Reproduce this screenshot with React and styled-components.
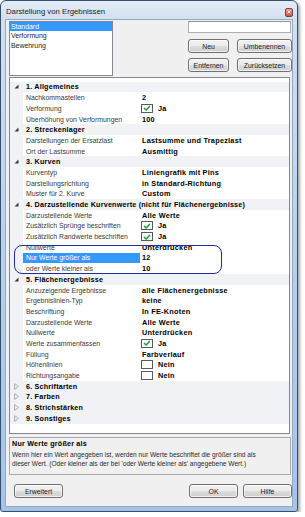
import styled, { createGlobalStyle } from 'styled-components'

const GlobalStyle = createGlobalStyle`
  html, body { margin: 0; padding: 0; background: #fff; }
  body { font-family: "Liberation Sans", Arial, sans-serif; color: #000; }
`

const Window = styled.div`
  box-sizing: border-box;
  width: 298px;
  height: 512px;
  display: flex;
  flex-direction: column;
  border: 1px solid #34506f;
  border-radius: 6px 6px 3px 3px;
  background: linear-gradient(to bottom, #e4ecf6 0px, #d2e0f0 18px, #b4cdea 60%, #a6c3e6 100%);
  box-shadow: 2px 2px 3px rgba(0, 0, 0, 0.35);
  padding: 0 4px 4px 4px;
`

const TitleBar = styled.div`
  height: 18px;
  display: flex;
  align-items: center;
  justify-content: space-between;
  padding: 0 0 0 1px;
`

const Title = styled.div`
  font-size: 7.75px;
  color: #1a1a1a;
  margin-top: 2px;
`

const CloseBtn = styled.div`
  box-sizing: border-box;
  width: 8px;
  height: 9px;
  margin-top: 4px;
  border: 1px solid #8a3b33;
  border-radius: 2px;
  background: linear-gradient(#eaa394, #c4524a);
  display: flex;
  align-items: center;
  justify-content: center;
`

const Client = styled.div`
  flex: 1;
  display: flex;
  flex-direction: column;
  background: #f0f0f0;
  border: 1px solid #93a9c3;
  padding: 1px 0 0 3px;
`

const TopSection = styled.div`
  display: flex;
  justify-content: space-between;
`

const ListBox = styled.div`
  box-sizing: border-box;
  width: 104px;
  height: 55px;
  background: #fff;
  border: 1px solid #828790;
`

const ListItem = styled.div`
  height: 9.3px;
  line-height: 9.3px;
  font-size: 6.9px;
  padding-left: 1px;
  color: ${p => (p.$selected ? '#fff' : '#1a1a1a')};
  background: ${p => (p.$selected ? '#3399ff' : 'transparent')};
`

const RightControls = styled.div`
  width: 104px;
  display: flex;
  flex-direction: column;
`

const TextBox = styled.div`
  box-sizing: border-box;
  width: 103px;
  height: 12px;
  background: #fff;
  border: 1px solid #abadb3;
  border-top-color: #8f9398;
`

const ButtonRow = styled.div`
  display: flex;
  gap: 8px;
  margin-top: ${p => p.$top}px;
`

const Button = styled.div`
  box-sizing: border-box;
  width: ${p => p.$w}px;
  height: 14px;
  border: 1px solid #707070;
  border-radius: 3px;
  background: linear-gradient(#f2f2f2 0%, #ebebeb 50%, #dddddd 51%, #cfcfcf 100%);
  box-shadow: inset 0 0 0 1px rgba(255, 255, 255, 0.7);
  display: flex;
  align-items: center;
  justify-content: center;
  font-size: 6.9px;
  color: #1a1a1a;
`

const Grid = styled.div`
  position: relative;
  box-sizing: border-box;
  width: 281px;
  height: 357px;
  margin-top: 1px;
  background: #fff;
  border: 1px solid #828790;
  padding-top: 3.6px;
`

const Row = styled.div`
  height: 10.7px;
  display: flex;
  align-items: stretch;
  background: ${p => (p.$category ? '#f1f2f5' : '#fff')};
`

const Margin = styled.div`
  width: 13px;
  flex-shrink: 0;
  display: flex;
  align-items: center;
  justify-content: center;
  background: #f1f2f5;
`

const NameCell = styled.div`
  width: 117px;
  flex-shrink: 0;
  box-sizing: border-box;
  padding-left: 3px;
  display: flex;
  align-items: center;
  font-size: 6.9px;
  white-space: nowrap;
  overflow: hidden;
  color: ${p => (p.$selected ? '#fff' : '#3a3a3a')};
  background: ${p => (p.$selected ? '#3399ff' : 'transparent')};
`

const ValueCell = styled.div`
  flex: 1;
  padding-left: 2px;
  display: flex;
  align-items: center;
  gap: 5px;
  font-size: 7.3px;
  font-weight: bold;
  letter-spacing: 0.25px;
  white-space: nowrap;
`

const CategoryTitle = styled.div`
  padding-left: 3px;
  display: flex;
  align-items: center;
  font-size: 7.2px;
  font-weight: bold;
  letter-spacing: 0.2px;
  white-space: nowrap;
`

const CheckBox = styled.div`
  box-sizing: border-box;
  width: 12px;
  height: 9px;
  margin-left: -1px;
  border: 1px solid #5a5a5a;
  background: #fff;
  display: flex;
  align-items: center;
  justify-content: center;
`

const Annotation = styled.div`
  position: absolute;
  left: 4px;
  top: 167px;
  width: 208px;
  height: 29px;
  box-sizing: border-box;
  border: 1.5px solid #1c2f9e;
  border-radius: 8px;
  pointer-events: none;
`

const HelpBox = styled.div`
  box-sizing: border-box;
  width: 282px;
  height: 38px;
  margin-top: 3px;
  border: 1px solid #a9a9a9;
  background: #f0f0f0;
  padding: 1px 0 0 2px;
`

const HelpTitle = styled.div`
  font-size: 7.2px;
  font-weight: bold;
  line-height: 9px;
  letter-spacing: 0.2px;
`

const HelpText = styled.div`
  margin-top: 2px;
  font-size: 6.6px;
  line-height: 9.3px;
  color: #2a2a2a;
  white-space: nowrap;
`

const Footer = styled.div`
  display: flex;
  gap: 5px;
  margin-top: 9px;
  padding-left: 5px;
`

const Spacer = styled.div`
  flex: 1;
`

const groups = [
  {
    title: '1. Allgemeines',
    rows: [
      { name: 'Nachkommastellen', value: '2' },
      { name: 'Verformung', check: 'on', value: 'Ja' },
      { name: 'Überhöhung von Verformungen', value: '100' },
    ],
  },
  {
    title: '2. Streckenlager',
    rows: [
      { name: 'Darstellungen der Ersatzlast', value: 'Lastsumme und Trapezlast' },
      { name: 'Ort der Lastsumme', value: 'Ausmittig' },
    ],
  },
  {
    title: '3. Kurven',
    rows: [
      { name: 'Kurventyp', value: 'Liniengrafik mit Pins' },
      { name: 'Darstellungsrichtung', value: 'in Standard-Richtung' },
      { name: 'Muster für 2. Kurve', value: 'Custom' },
    ],
  },
  {
    title: '4. Darzustellende Kurvenwerte (nicht für Flächenergebnisse)',
    rows: [
      { name: 'Darzustellende Werte', value: 'Alle Werte' },
      { name: 'Zusätzlich Sprünge beschriften', check: 'on', value: 'Ja' },
      { name: 'Zusätzlich Randwerte beschriften', check: 'on', value: 'Ja' },
      { name: 'Nullwerte', value: 'Unterdrücken' },
      { name: 'Nur Werte größer als', value: '12', selected: true },
      { name: 'oder Werte kleiner als', value: '10' },
    ],
  },
  {
    title: '5. Flächenergebnisse',
    rows: [
      { name: 'Anzuzeigende Ergebnisse', value: 'alle Flächenergebnisse' },
      { name: 'Ergebnislinien-Typ', value: 'keine' },
      { name: 'Beschriftung', value: 'In FE-Knoten' },
      { name: 'Darzustellende Werte', value: 'Alle Werte' },
      { name: 'Nullwerte', value: 'Unterdrücken' },
      { name: 'Werte zusammenfassen', check: 'on', value: 'Ja' },
      { name: 'Füllung', value: 'Farbverlauf' },
      { name: 'Höhenlinien', check: 'off', value: 'Nein' },
      { name: 'Richtungsangabe', check: 'off', value: 'Nein' },
    ],
  },
  { title: '6. Schriftarten' },
  { title: '7. Farben' },
  { title: '8. Strichstärken' },
  { title: '9. Sonstiges' },
]

const Expander = ({ open }) =>
  open ? (
    <svg width="5" height="5" viewBox="0 0 5 5">
      <path d="M0.5 4.5 L4.5 4.5 L4.5 0.5 Z" fill="#3a3a3a" />
    </svg>
  ) : (
    <svg width="5" height="7" viewBox="0 0 5 7">
      <path d="M0.6 0.6 L4.4 3.5 L0.6 6.4 Z" fill="none" stroke="#9a9a9a" strokeWidth="0.8" />
    </svg>
  )

const Tick = () => (
  <svg width="8" height="6" viewBox="0 0 8 6">
    <path d="M1 3 L3.1 5 L7 1" fill="none" stroke="#1f9a3c" strokeWidth="1.5" />
  </svg>
)

const App = () => (
  <>
    <GlobalStyle />
    <Window>
      <TitleBar>
        <Title>Darstellung von Ergebnissen</Title>
        <CloseBtn>
          <svg width="4" height="4" viewBox="0 0 4 4">
            <path d="M0.5 0.5 L3.5 3.5 M3.5 0.5 L0.5 3.5" stroke="#fff" strokeWidth="0.9" />
          </svg>
        </CloseBtn>
      </TitleBar>
      <Client>
        <TopSection>
          <ListBox>
            <ListItem $selected>Standard</ListItem>
            <ListItem>Verformung</ListItem>
            <ListItem>Bewehrung</ListItem>
          </ListBox>
          <RightControls>
            <TextBox />
            <ButtonRow $top={6}>
              <Button $w={41}>Neu</Button>
              <Button $w={55}>Umbenennen</Button>
            </ButtonRow>
            <ButtonRow $top={5}>
              <Button $w={41}>Entfernen</Button>
              <Button $w={55}>Zurücksetzen</Button>
            </ButtonRow>
          </RightControls>
        </TopSection>

        <Grid>
          {groups.map(g => (
            <div key={g.title}>
              <Row $category>
                <Margin>
                  <Expander open={!!g.rows} />
                </Margin>
                <CategoryTitle>{g.title}</CategoryTitle>
              </Row>
              {g.rows &&
                g.rows.map(r => (
                  <Row key={r.name}>
                    <Margin />
                    <NameCell $selected={r.selected}>{r.name}</NameCell>
                    <ValueCell>
                      {r.check && <CheckBox>{r.check === 'on' && <Tick />}</CheckBox>}
                      {r.value}
                    </ValueCell>
                  </Row>
                ))}
            </div>
          ))}
          <Annotation />
        </Grid>

        <HelpBox>
          <HelpTitle>Nur Werte größer als</HelpTitle>
          <HelpText>
            Wenn hier ein Wert angegeben ist, werden nur Werte beschriftet die größer sind als
            <br />
            dieser Wert. (Oder kleiner als der bei 'oder Werte kleiner als' angegebene Wert.)
          </HelpText>
        </HelpBox>

        <Footer>
          <Button $w={49}>Erweitert</Button>
          <Spacer />
          <Button $w={49}>OK</Button>
          <Button $w={49}>Hilfe</Button>
        </Footer>
      </Client>
    </Window>
  </>
)

export default App
